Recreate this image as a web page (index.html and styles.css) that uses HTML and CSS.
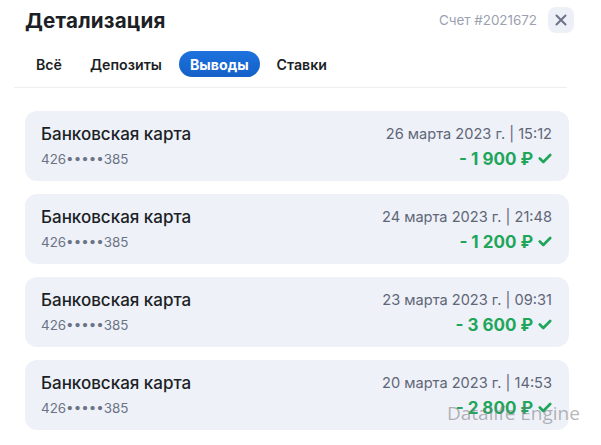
FILE: index.html
```html
<!DOCTYPE html>
<html lang="ru">
<head>
  <meta charset="UTF-8">
  <meta name="viewport" content="width=device-width, initial-scale=1.0">
  <title>Детализация</title>
  <link rel="stylesheet" href="styles.css">
</head>
<body>
  <div class="modal">
    <div class="modal-header">
      <h1>Детализация</h1>
      <div class="header-right">
        <span class="account">Счет #2021672</span>
        <button class="close-btn" aria-label="Закрыть">
          <svg width="12" height="12" viewBox="0 0 12 12"><path d="M1.5 1.5 L10.5 10.5 M10.5 1.5 L1.5 10.5" stroke="#6b7386" stroke-width="2" stroke-linecap="round"/></svg>
        </button>
      </div>
    </div>

    <div class="tabs">
      <span class="tab">Всё</span>
      <span class="tab">Депозиты</span>
      <span class="tab active">Выводы</span>
      <span class="tab">Ставки</span>
    </div>
    <div class="divider"></div>

    <div class="list">
      <div class="item">
        <div class="row">
          <span class="item-title">Банковская карта</span>
          <span class="item-date">26 марта 2023 г. | 15:12</span>
        </div>
        <div class="row">
          <span class="item-card">426•••••385</span>
          <span class="item-amount">- 1 900 ₽ <svg class="check" width="14" height="11" viewBox="0 0 14 11"><path d="M1.8 5.5 L5.3 9 L12.2 2" fill="none" stroke="#1fa65a" stroke-width="2.6" stroke-linecap="round" stroke-linejoin="round"/></svg></span>
        </div>
      </div>
      <div class="item">
        <div class="row">
          <span class="item-title">Банковская карта</span>
          <span class="item-date">24 марта 2023 г. | 21:48</span>
        </div>
        <div class="row">
          <span class="item-card">426•••••385</span>
          <span class="item-amount">- 1 200 ₽ <svg class="check" width="14" height="11" viewBox="0 0 14 11"><path d="M1.8 5.5 L5.3 9 L12.2 2" fill="none" stroke="#1fa65a" stroke-width="2.6" stroke-linecap="round" stroke-linejoin="round"/></svg></span>
        </div>
      </div>
      <div class="item">
        <div class="row">
          <span class="item-title">Банковская карта</span>
          <span class="item-date">23 марта 2023 г. | 09:31</span>
        </div>
        <div class="row">
          <span class="item-card">426•••••385</span>
          <span class="item-amount">- 3 600 ₽ <svg class="check" width="14" height="11" viewBox="0 0 14 11"><path d="M1.8 5.5 L5.3 9 L12.2 2" fill="none" stroke="#1fa65a" stroke-width="2.6" stroke-linecap="round" stroke-linejoin="round"/></svg></span>
        </div>
      </div>
      <div class="item">
        <div class="row">
          <span class="item-title">Банковская карта</span>
          <span class="item-date">20 марта 2023 г. | 14:53</span>
        </div>
        <div class="row">
          <span class="item-card">426•••••385</span>
          <span class="item-amount">- 2 800 ₽ <svg class="check" width="14" height="11" viewBox="0 0 14 11"><path d="M1.8 5.5 L5.3 9 L12.2 2" fill="none" stroke="#1fa65a" stroke-width="2.6" stroke-linecap="round" stroke-linejoin="round"/></svg></span>
        </div>
      </div>
    </div>

    <div class="watermark">Datalife Engine</div>
  </div>
</body>
</html>
```

FILE: styles.css
```css
body {
  margin: 0;
  background: #fff;
  font-family: Inter, Roboto, "Noto Sans", sans-serif;
  color: #1c1f26;
}
.modal {
  position: relative;
  width: 601px;
  height: 445px;
  padding: 7px 0 0;
  box-sizing: border-box;
  overflow: hidden;
}
.modal-header {
  display: flex;
  align-items: center;
  justify-content: space-between;
  padding: 0 27px 0 25px;
  height: 26px;
}
h1 {
  margin: 0;
  font-size: 20.6px;
  font-weight: 700;
  letter-spacing: 0.2px;
  color: #1c1f26;
}
.header-right {
  display: flex;
  align-items: center;
  gap: 11px;
}
.account {
  font-size: 13.4px;
  color: #9aa1b0;
}
.close-btn {
  width: 26px;
  height: 26px;
  border: none;
  border-radius: 8px;
  background: #eef0f8;
  display: flex;
  align-items: center;
  justify-content: center;
  padding: 0;
  cursor: pointer;
}
.tabs {
  display: flex;
  gap: 6px;
  padding: 0 25px;
  margin-top: 18px;
}
.tab {
  height: 26px;
  line-height: 27px;
  padding: 0 11px;
  border-radius: 13px;
  font-size: 14.2px;
  font-weight: 600;
  color: #1c1f26;
}
.tab.active {
  background: linear-gradient(180deg, #1d72dd, #1460c8);
  color: #fff;
  font-weight: 700;
}
.divider {
  margin: 10px 0 0 14px;
  width: 553px;
  height: 1px;
  background: #eceef2;
}
.list {
  display: flex;
  flex-direction: column;
  gap: 13px;
  padding: 0 32px 0 25px;
  margin-top: 23px;
}
.item {
  background: #eef1f8;
  border-radius: 12px;
  padding: 10px 17px 10px 16px;
}
.row {
  display: flex;
  justify-content: space-between;
  align-items: center;
  height: 25px;
}
.item-title {
  font-size: 17px;
  font-weight: 500;
  color: #1c1f26;
}
.item-date {
  font-size: 14.6px;
  color: #5f6677;
}
.item-card {
  font-size: 13.4px;
  color: #6b7385;
}
.item-amount {
  display: flex;
  align-items: center;
  gap: 5px;
  font-size: 17px;
  font-weight: 700;
  color: #1fa65a;
}
.watermark {
  position: absolute;
  left: 447px;
  top: 400px;
  font-family: "Open Sans", "Noto Sans", sans-serif;
  font-size: 19px;
  color: rgba(120, 120, 125, 0.55);
  pointer-events: none;
}
```
